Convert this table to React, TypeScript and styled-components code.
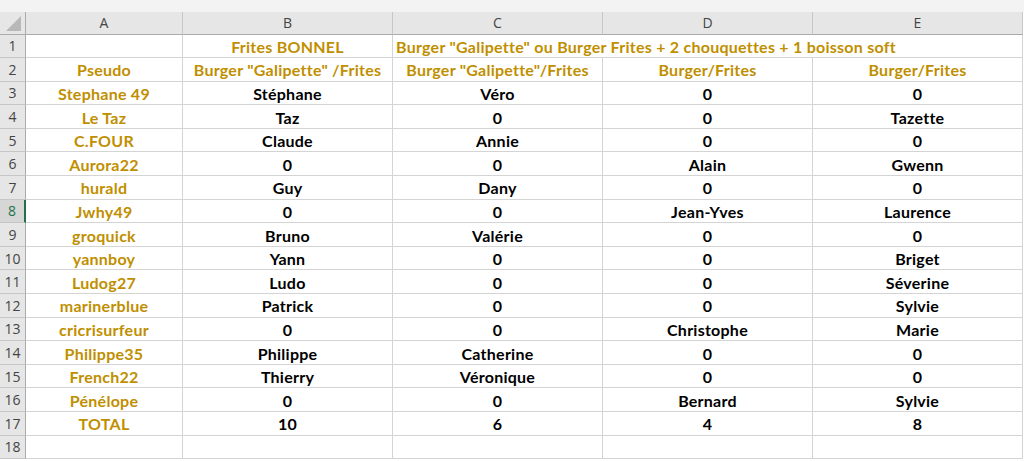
import React from "react";
import styled, { createGlobalStyle } from "styled-components";

const Global = createGlobalStyle`
  html, body { margin: 0; padding: 0; background: #ffffff; }
  body { width: 1024px; height: 461px; overflow: hidden; }
`;

const Sheet = styled.div`
  display: flex;
  flex-direction: column;
  width: 1024px;
  height: 461px;
  background: #ffffff;
  overflow: hidden;
`;

const TopStrip = styled.div`
  height: 12px;
  background: #f3f3f3;
  flex: none;
`;

const Grid = styled.div`
  display: grid;
  grid-template-columns: 26px 157px 210px 210px 210px 210px;
  grid-template-rows: 22.5px;
  grid-auto-rows: 23.6px;
`;

const Corner = styled.div`
  background: #e6e6e6;
  border-right: 1px solid #ababab;
  border-bottom: 1px solid #ababab;
  position: relative;
  box-sizing: border-box;
  &::after {
    content: "";
    position: absolute;
    right: 4px;
    bottom: 3px;
    width: 0;
    height: 0;
    border-left: 15px solid transparent;
    border-bottom: 15px solid #b8b8b8;
  }
`;

const ColHead = styled.div`
  background: #e6e6e6;
  border-right: 1px solid #c6c6c6;
  border-bottom: 1px solid #ababab;
  box-sizing: border-box;
  display: flex;
  align-items: center;
  justify-content: center;
  font-family: "Open Sans", "Noto Sans", sans-serif;
  font-size: 14px;
  color: #444444;
`;

const RowHead = styled.div<{ $active?: boolean }>`
  background: ${(p) => (p.$active ? "#d6d6d6" : "#e6e6e6")};
  border-right: ${(p) => (p.$active ? "2px solid #217346" : "1px solid #ababab")};
  border-bottom: 1px solid #c6c6c6;
  box-sizing: border-box;
  display: flex;
  align-items: center;
  justify-content: center;
  font-family: "Open Sans", "Noto Sans", sans-serif;
  font-size: 14px;
  color: ${(p) => (p.$active ? "#217346" : "#444444")};
`;

const Cell = styled.div<{ $gold?: boolean; $span?: number; $left?: boolean }>`
  grid-column: span ${(p) => p.$span ?? 1};
  border-right: 1px solid #d4d4d4;
  border-bottom: 1px solid #d4d4d4;
  box-sizing: border-box;
  display: flex;
  align-items: center;
  justify-content: ${(p) => (p.$left ? "flex-start" : "center")};
  padding-left: ${(p) => (p.$left ? "3px" : "0")};
  padding-top: 1px;
  font-family: Lato, "Open Sans", sans-serif;
  font-weight: 700;
  font-size: 16px;
  letter-spacing: 0.25px;
  color: ${(p) => (p.$gold ? "#bf8f00" : "#000000")};
  white-space: nowrap;
  overflow: hidden;
`;

const rows: string[][] = [
  ["Stephane 49", "Stéphane", "Véro", "0", "0"],
  ["Le Taz", "Taz", "0", "0", "Tazette"],
  ["C.FOUR", "Claude", "Annie", "0", "0"],
  ["Aurora22", "0", "0", "Alain", "Gwenn"],
  ["hurald", "Guy", "Dany", "0", "0"],
  ["Jwhy49", "0", "0", "Jean-Yves", "Laurence"],
  ["groquick", "Bruno", "Valérie", "0", "0"],
  ["yannboy", "Yann", "0", "0", "Briget"],
  ["Ludog27", "Ludo", "0", "0", "Séverine"],
  ["marinerblue", "Patrick", "0", "0", "Sylvie"],
  ["cricrisurfeur", "0", "0", "Christophe", "Marie"],
  ["Philippe35", "Philippe", "Catherine", "0", "0"],
  ["French22", "Thierry", "Véronique", "0", "0"],
  ["Pénélope", "0", "0", "Bernard", "Sylvie"],
  ["TOTAL", "10", "6", "4", "8"],
];

export default function App() {
  return (
    <>
      <Global />
      <Sheet>
        <TopStrip />
        <Grid>
          <Corner />
          {["A", "B", "C", "D", "E"].map((c) => (
            <ColHead key={c}>{c}</ColHead>
          ))}

          <RowHead>1</RowHead>
          <Cell />
          <Cell $gold>Frites BONNEL</Cell>
          <Cell $gold $span={3} $left>
            Burger "Galipette" ou Burger Frites + 2 chouquettes + 1 boisson soft
          </Cell>

          <RowHead>2</RowHead>
          <Cell $gold>Pseudo</Cell>
          <Cell $gold>Burger "Galipette" /Frites</Cell>
          <Cell $gold>Burger "Galipette"/Frites</Cell>
          <Cell $gold>Burger/Frites</Cell>
          <Cell $gold>Burger/Frites</Cell>

          {rows.map((r, i) => {
            const n = i + 3;
            return (
              <React.Fragment key={n}>
                <RowHead $active={n === 8}>{n}</RowHead>
                {r.map((v, j) => (
                  <Cell key={j} $gold={j === 0}>
                    {v}
                  </Cell>
                ))}
              </React.Fragment>
            );
          })}

          <RowHead>18</RowHead>
          <Cell />
          <Cell />
          <Cell />
          <Cell />
          <Cell />
        </Grid>
      </Sheet>
    </>
  );
}
